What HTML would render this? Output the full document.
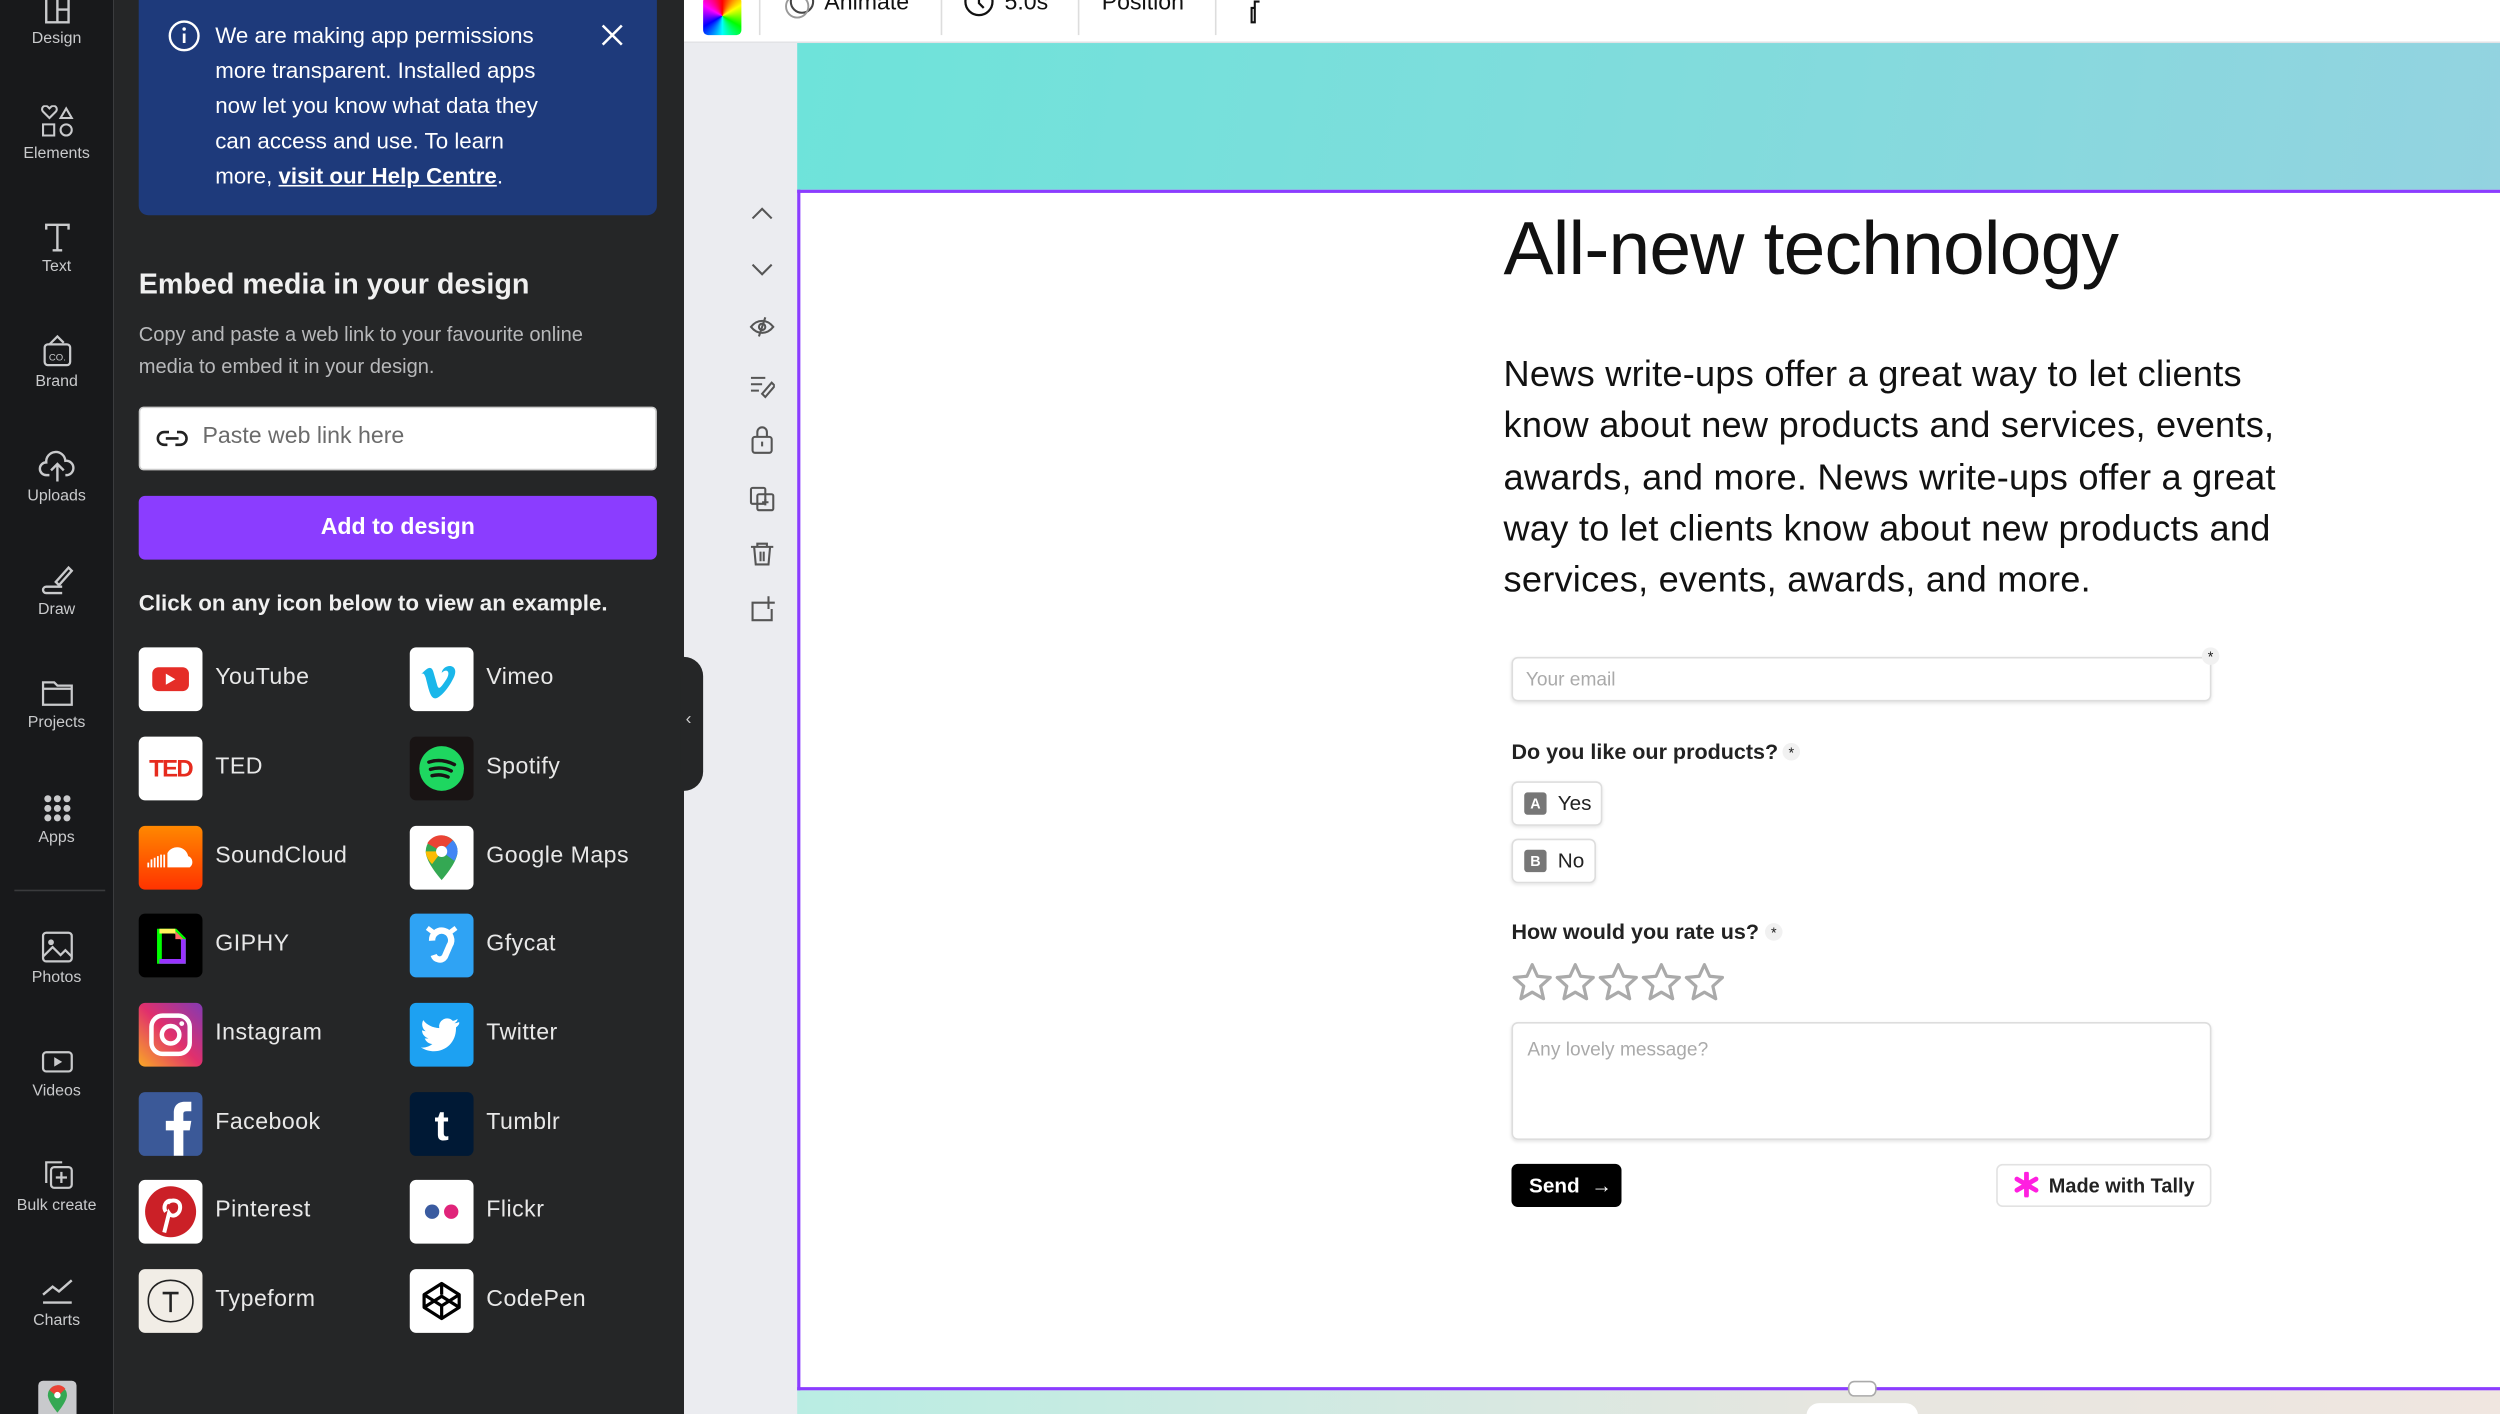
<!DOCTYPE html>
<html><head><meta charset="utf-8"><style>
*{box-sizing:border-box;margin:0;padding:0}
html,body{width:2500px;height:1414px;overflow:hidden;background:#ebecf0}
#w{position:absolute;left:0;top:0;width:1568px;height:887px;overflow:hidden;transform:scale(1.59439);transform-origin:0 0;font-family:"Liberation Sans",sans-serif;background:#ebecf0}
.a{position:absolute}
.rail{left:0;top:0;width:71px;height:887px;background:#18191b}
.ri{position:absolute;left:0;width:71px;text-align:center;color:#c9cacc;font-size:10px}
.ri svg{display:block;margin:0 auto 3px}
.panel{left:71px;top:0;width:358px;height:887px;background:#252627}
.app{position:absolute;width:170px;height:40px;color:#e8e8e8;font-size:14.5px}
.app .ic{position:absolute;left:0;top:0;width:40px;height:40px;border-radius:4px;overflow:hidden}
.app span{position:absolute;left:48px;top:11px;letter-spacing:.3px}
.form{color:#222;font-size:13.5px}
</style></head><body><div id="w">
<div class="a rail"></div>
<div class="ri" style="top:0"><svg width="20" height="16" viewBox="0 0 20 16"><path d="M3 0v14h14V0M10 0v14M10 6h7" fill="none" stroke="#c9cacc" stroke-width="1.5"/></svg>Design</div>
<div class="ri" style="top:66px"><svg width="22" height="22" viewBox="0 0 22 22"><path d="M6 8L2 4a2 2 0 013-3l1 1 1-1a2 2 0 013 3zM13 8l3.5-6L20 8zM2 12h7v7H2z" fill="none" stroke="#c9cacc" stroke-width="1.3"/><circle cx="16.5" cy="15.5" r="3.5" fill="none" stroke="#c9cacc" stroke-width="1.3"/></svg>Elements</div>
<div class="ri" style="top:139px"><svg width="20" height="20" viewBox="0 0 20 20"><path d="M3 5V2h14v3M10 2v16M7 18h6" fill="none" stroke="#c9cacc" stroke-width="1.5"/></svg>Text</div>
<div class="ri" style="top:209px"><svg width="22" height="22" viewBox="0 0 22 22"><rect x="3" y="7" width="16" height="13" rx="2" fill="none" stroke="#c9cacc" stroke-width="1.4"/><path d="M6 7l5-5 4 4" fill="none" stroke="#c9cacc" stroke-width="1.4"/><text x="11" y="17" font-size="6" fill="#c9cacc" text-anchor="middle" font-family="Liberation Sans">CO.</text></svg>Brand</div>
<div class="ri" style="top:281px"><svg width="24" height="22" viewBox="0 0 24 22"><path d="M7 17H5a4 4 0 010-8 6 6 0 0112-1 4.5 4.5 0 011 9h-1M12 21V10M8 14l4-4 4 4" fill="none" stroke="#c9cacc" stroke-width="1.5"/></svg>Uploads</div>
<div class="ri" style="top:352px"><svg width="22" height="22" viewBox="0 0 22 22"><path d="M10 13l8-9 2 2-8 9zM14 16H4a2 2 0 000 4h10" fill="none" stroke="#c9cacc" stroke-width="1.5"/></svg>Draw</div>
<div class="ri" style="top:425px"><svg width="22" height="20" viewBox="0 0 22 20"><path d="M2 3h7l2 2h9v12H2z M2 7h18" fill="none" stroke="#c9cacc" stroke-width="1.4"/></svg>Projects</div>
<div class="ri" style="top:497px"><svg width="20" height="20" viewBox="0 0 20 20" fill="#c9cacc"><circle cx="4" cy="4" r="2.2"/><circle cx="10" cy="4" r="2.2"/><circle cx="16" cy="4" r="2.2"/><circle cx="4" cy="10" r="2.2"/><circle cx="10" cy="10" r="2.2"/><circle cx="16" cy="10" r="2.2"/><circle cx="4" cy="16" r="2.2"/><circle cx="10" cy="16" r="2.2"/><circle cx="16" cy="16" r="2.2"/></svg>Apps</div>
<div class="a" style="left:9px;top:558px;width:57px;height:1px;background:#3a3b3d"></div>
<div class="ri" style="top:583px"><svg width="22" height="22" viewBox="0 0 22 22"><rect x="2" y="2" width="18" height="18" rx="2" fill="none" stroke="#c9cacc" stroke-width="1.4"/><circle cx="7" cy="8" r="1.8" fill="#c9cacc"/><path d="M2 17l6-6 5 5 3-3 4 4" fill="none" stroke="#c9cacc" stroke-width="1.4"/></svg>Photos</div>
<div class="ri" style="top:656px"><svg width="22" height="20" viewBox="0 0 22 20"><rect x="2" y="4" width="18" height="12" rx="2" fill="none" stroke="#c9cacc" stroke-width="1.4"/><path d="M9 7v6l5-3z" fill="#c9cacc"/></svg>Videos</div>
<div class="ri" style="top:726px"><svg width="22" height="22" viewBox="0 0 22 22"><path d="M4 16V3h10" fill="none" stroke="#c9cacc" stroke-width="1.4"/><rect x="7" y="6" width="13" height="13" rx="2" fill="none" stroke="#c9cacc" stroke-width="1.4"/><path d="M13.5 9v7M10 12.5h7" stroke="#c9cacc" stroke-width="1.4"/></svg>Bulk create</div>
<div class="ri" style="top:798px"><svg width="22" height="22" viewBox="0 0 22 22"><path d="M2 14l6-5 4 3 8-7M2 19h18" fill="none" stroke="#c9cacc" stroke-width="1.5"/></svg>Charts</div>
<div class="a" style="left:24px;top:866px;width:24px;height:24px;background:#c8c9cc;border-radius:3px"><svg width="24" height="24" viewBox="0 0 24 24"><path d="M12 3a6 6 0 00-6 6c0 4 6 11 6 11s6-7 6-11a6 6 0 00-6-6z" fill="#34a853"/><path d="M7 6a6 6 0 0110-1l-5 5z" fill="#ea4335"/><circle cx="12" cy="9" r="2" fill="#fff"/></svg></div>

<div class="a panel"></div>
<div class="a" style="left:87px;top:-10px;width:325px;height:145px;background:#1e3a7b;border-radius:6px"></div>
<svg class="a" style="left:105px;top:12px" width="21" height="21" viewBox="0 0 21 21"><circle cx="10.5" cy="10.5" r="9" fill="none" stroke="#fff" stroke-width="1.5"/><path d="M10.5 9v6" stroke="#fff" stroke-width="1.7"/><circle cx="10.5" cy="6.2" r="1.1" fill="#fff"/></svg>
<div class="a" style="left:135px;top:11px;width:260px;color:#fff;font-size:14px;line-height:22px;white-space:nowrap">We are making app permissions<br>more transparent. Installed apps<br>now let you know what data they<br>can access and use. To learn<br>more, <b style="text-decoration:underline">visit our Help Centre</b>.</div>
<svg class="a" style="left:376px;top:14px" width="16" height="16" viewBox="0 0 16 16"><path d="M2 2l12 12M14 2L2 14" stroke="#fff" stroke-width="1.6"/></svg>
<div class="a" style="left:87px;top:168px;color:#f0f0f0;font-size:18px;font-weight:bold">Embed media in your design</div>
<div class="a" style="left:87px;top:200px;width:310px;color:#b8b9bb;font-size:12.6px;line-height:20px">Copy and paste a web link to your favourite online media to embed it in your design.</div>
<div class="a" style="left:87px;top:255px;width:325px;height:40px;background:#fff;border-radius:3px;border:1px solid #ccc"></div>
<svg class="a" style="left:97px;top:266px" width="22" height="18" viewBox="0 0 22 18"><path d="M9 5H6a4 4 0 000 8h2M13 13h3a4 4 0 000-8h-2M7 9h8" fill="none" stroke="#222" stroke-width="1.6"/></svg>
<div class="a" style="left:127px;top:266px;color:#6b6b6b;font-size:14.5px">Paste web link here</div>
<div class="a" style="left:87px;top:311px;width:325px;height:40px;background:#8b3dff;border-radius:4px;color:#fff;font-size:14.5px;font-weight:bold;text-align:center;line-height:40px">Add to design</div>
<div class="a" style="left:87px;top:370px;color:#f0f0f0;font-size:14px;font-weight:bold">Click on any icon below to view an example.</div>

<div class="app" style="left:87px;top:406px"><div class="ic" style="background:#fff"><svg width="40" height="40"><rect x="8.5" y="12.5" width="23" height="15" rx="4" fill="#e52d27"/><path d="M17 16.5v7l6-3.5z" fill="#fff"/></svg></div><span>YouTube</span></div>
<div class="app" style="left:257px;top:406px"><div class="ic" style="background:#fff"><svg width="40" height="40"><path d="M9 15c3-3 5-3 6 1l2 7c1 4 2 3 6-3 3-5 0-7-3-4 1-6 11-6 8 2-3 7-9 14-12 14-3 0-4-5-6-13-1-3-2-3-3-2z" fill="#1ab7ea"/></svg></div><span>Vimeo</span></div>
<div class="app" style="left:87px;top:462px"><div class="ic" style="background:#fff"><svg width="40" height="40"><text x="20" y="25" font-family="Liberation Sans" font-weight="bold" font-size="15" fill="#e62b1e" text-anchor="middle" letter-spacing="-1">TED</text></svg></div><span>TED</span></div>
<div class="app" style="left:257px;top:462px"><div class="ic" style="background:#191414"><svg width="40" height="40"><circle cx="20" cy="20" r="14" fill="#1ed760"/><path d="M12 16c6-2 11-1 16 1.5M13 20.5c5-1.5 9-1 13 1M14 24.5c4-1 7-.6 10 .8" fill="none" stroke="#191414" stroke-width="2.2" stroke-linecap="round"/></svg></div><span>Spotify</span></div>
<div class="app" style="left:87px;top:518px"><div class="ic" style="background:linear-gradient(#ff8800,#ff3300)"><svg width="40" height="40"><path d="M18 26V17a7 7 0 0113 2 4 4 0 011 7z" fill="#fff"/><path d="M6 26v-3M8 26v-5M10 26v-6M12 26v-7M14 26v-8M16 26v-8" stroke="#fff" stroke-width="1.1"/></svg></div><span>SoundCloud</span></div>
<div class="app" style="left:257px;top:518px"><div class="ic" style="background:#fff"><svg width="40" height="40"><path d="M20 6a10 10 0 00-10 10c0 7 10 18 10 18s10-11 10-18A10 10 0 0020 6z" fill="#34a853"/><path d="M11 11a10 10 0 0116-2L20 16z" fill="#ea4335"/><path d="M10 16c0 3 2 6 4 8l6-8z" fill="#fbbc04"/><path d="M27 9a10 10 0 013 7c0 2-1 4-2 6l-8-6z" fill="#4285f4"/><circle cx="20" cy="16" r="3.5" fill="#fff"/></svg></div><span>Google Maps</span></div>
<div class="app" style="left:87px;top:573px"><div class="ic" style="background:#000"><svg width="40" height="40"><path d="M13 11h10l5 5v14H13z" fill="none" stroke="#0f0" stroke-width="3"/><path d="M13 11h10" stroke="#fff35c" stroke-width="3"/><path d="M28 16v14H13" stroke="#9933ff" stroke-width="3" fill="none"/><path d="M23 11l5 5h-5z" fill="#ff6666"/></svg></div><span>GIPHY</span></div>
<div class="app" style="left:257px;top:573px"><div class="ic" style="background:#2fa3f4"><svg width="40" height="40"><path d="M11 9l4 3M29 9l-4 3" stroke="#fff" stroke-width="3"/><path d="M14 17a6 6 0 1111 3l-3 7c-2 3-6 2-7-1" fill="none" stroke="#fff" stroke-width="4"/></svg></div><span>Gfycat</span></div>
<div class="app" style="left:87px;top:629px"><div class="ic" style="background:linear-gradient(45deg,#f9a826,#e1306c 50%,#833ab4)"><svg width="40" height="40"><rect x="8" y="8" width="24" height="24" rx="7" fill="none" stroke="#fff" stroke-width="2.8"/><circle cx="20" cy="20" r="5.5" fill="none" stroke="#fff" stroke-width="2.8"/><circle cx="27" cy="13" r="1.5" fill="#fff"/></svg></div><span>Instagram</span></div>
<div class="app" style="left:257px;top:629px"><div class="ic" style="background:#1da1f2"><svg width="40" height="40"><path d="M31 12c-1 .5-2 .7-3 .8 1-.6 2-1.6 2-2.7-1 .6-2 1-3 1.2a5 5 0 00-8.5 4.5c-4-.2-8-2-10-5-1.5 2.5-.5 5.5 1.5 7-.8 0-1.6-.3-2.3-.6 0 2.5 1.8 4.5 4 5-.7.2-1.5.2-2.3.1.7 2 2.6 3.5 4.8 3.5A10 10 0 017 28c10 6 22 0 22-12v-.6c1-.8 1.7-1.6 2-2.4z" fill="#fff"/></svg></div><span>Twitter</span></div>
<div class="app" style="left:87px;top:685px"><div class="ic" style="background:#3b5998"><svg width="40" height="40"><path d="M22 40V24h-5v-6h5v-5c0-5 3-7 7-7h4v6h-3c-2 0-2 1-2 2v4h5l-1 6h-4v16z" fill="#fff"/></svg></div><span>Facebook</span></div>
<div class="app" style="left:257px;top:685px"><div class="ic" style="background:#001935"><svg width="40" height="40"><text x="20" y="30" font-family="Liberation Sans" font-weight="bold" font-size="27" fill="#fff" text-anchor="middle">t</text></svg></div><span>Tumblr</span></div>
<div class="app" style="left:87px;top:740px"><div class="ic" style="background:#fff"><svg width="40" height="40"><circle cx="20" cy="20" r="16" fill="#cb2027"/><path d="M18 15c1-3 8-3 8 2 0 5-5 7-7 4l-3 12M17 20c-2-3 0-7 3-7" fill="none" stroke="#fff" stroke-width="2.5"/></svg></div><span>Pinterest</span></div>
<div class="app" style="left:257px;top:740px"><div class="ic" style="background:#fff"><svg width="40" height="40"><circle cx="14" cy="20" r="4.5" fill="#3a5ba0"/><circle cx="26" cy="20" r="4.5" fill="#e0247a"/></svg></div><span>Flickr</span></div>
<div class="app" style="left:87px;top:796px"><div class="ic" style="background:#f1ede6"><svg width="40" height="40"><path d="M20 7c8 0 14 5 14 13s-6 13-14 13S6 28 6 20 12 7 20 7z" fill="none" stroke="#222" stroke-width="1"/><path d="M15 15h10M20 15v12" stroke="#222" stroke-width="1.6"/></svg></div><span>Typeform</span></div>
<div class="app" style="left:257px;top:796px"><div class="ic" style="background:#fff"><svg width="40" height="40"><path d="M20 9l11 7v8l-11 7-11-7v-8zM9 16l11 7 11-7M20 9v7M9 24l11-7 11 7M20 31v-8" fill="none" stroke="#000" stroke-width="2" stroke-linejoin="round"/></svg></div><span>CodePen</span></div>

<div class="a" style="left:427px;top:412px;width:14px;height:84px;background:#252627;border-radius:0 12px 12px 0"></div>
<div class="a" style="left:430px;top:445px;color:#ccc;font-size:11px">‹</div>

<div class="a" style="left:429px;top:0;width:1139px;height:27px;background:#fff;border-bottom:1px solid #e2e3e6"></div>
<div class="a" style="left:441px;top:-2px;width:24px;height:24px;border-radius:3px;background:conic-gradient(red,yellow,lime,cyan,blue,magenta,red)"></div>
<div class="a" style="left:476px;top:0;width:1px;height:22px;background:#ddd"></div>
<svg class="a" style="left:490px;top:-8px" width="22" height="22"><circle cx="13" cy="9" r="7" fill="none" stroke="#444" stroke-width="1.3"/><circle cx="10" cy="12" r="7" fill="none" stroke="#999" stroke-width="1.2"/></svg>
<div class="a" style="left:517px;top:-6px;font-size:14.5px;color:#111">Animate</div>
<div class="a" style="left:590px;top:0;width:1px;height:22px;background:#ddd"></div>
<svg class="a" style="left:603px;top:-8px" width="22" height="22"><circle cx="11" cy="9" r="8.5" fill="none" stroke="#111" stroke-width="1.4"/><path d="M11 4v6l3 3" fill="none" stroke="#111" stroke-width="1.4"/></svg>
<div class="a" style="left:630px;top:-6px;font-size:14.5px;color:#111">5.0s</div>
<div class="a" style="left:676px;top:0;width:1px;height:22px;background:#ddd"></div>
<div class="a" style="left:691px;top:-6px;font-size:14.5px;color:#111">Position</div>
<div class="a" style="left:762px;top:0;width:1px;height:22px;background:#ddd"></div>
<svg class="a" style="left:780px;top:0" width="14" height="16"><path d="M10 1H7v4H5v9h2V5" fill="none" stroke="#111" stroke-width="1.3"/></svg>

<svg class="a" style="left:470px;top:126px" width="16" height="280" viewBox="0 0 16 280" fill="none" stroke="#555" stroke-width="1.3">
<path d="M2 11l6-6 6 6"/><path d="M2 40l6 6 6-6"/>
<path d="M1 79c4-5 10-5 14 0-4 5-10 5-14 0zM10 73l-4 12"/><circle cx="8" cy="79" r="2"/>
<path d="M1 111h9M1 115h7M1 119h5M8 121l6-7 2 2-6 7z"/>
<rect x="2" y="148" width="12" height="10" rx="1.5"/><path d="M5 148v-3a3 3 0 016 0v3M8 151v3"/>
<rect x="1" y="180" width="9" height="10" rx="1"/><rect x="5" y="184" width="10" height="10" rx="1"/><path d="M10 187v4M8 189h4"/>
<path d="M1 217h14M5 217v-2h6v2M3 217l1 11h8l1-11M7 220v6M9 220v6"/>
<path d="M10 252H2v11h12v-7M12 248v8M8 252h8"/>
</svg>

<div class="a" style="left:500px;top:27px;width:1068px;height:93px;background:linear-gradient(100deg,#6ee3da,#80dcdc 50%,#93d3e0)"></div>
<div class="a" style="left:500px;top:870px;width:1068px;height:17px;background:linear-gradient(90deg,#b9ede3,#e6e6e0 60%,#f0e6e0)"></div>
<div class="a" style="left:500px;top:119px;width:1070px;height:753px;background:#fff;border:2px solid #8b3dff;border-right:none"></div>
<div class="a" style="left:1159px;top:866px;width:18px;height:10px;background:#fff;border:1px solid #aaa;border-radius:4px"></div>
<div class="a" style="left:1133px;top:880px;width:70px;height:14px;background:#fff;border-radius:8px 8px 0 0"></div>

<div class="a" style="left:943px;top:128px;font-size:47px;color:#111;font-weight:300;letter-spacing:-0.5px">All-new technology</div>
<div class="a" style="left:943px;top:218px;width:510px;font-size:22.7px;line-height:32.3px;color:#111;letter-spacing:.15px">News write-ups offer a great way to let clients know about new products and services, events, awards, and more. News write-ups offer a great way to let clients know about new products and services, events, awards, and more.</div>

<div class="form">
<div class="a" style="left:948px;top:412px;width:439px;height:28px;border:1px solid #ddd;border-radius:4px;box-shadow:0 1px 2px rgba(0,0,0,.1)"></div>
<div class="a" style="left:957px;top:419px;font-size:12px;color:#aaa">Your email</div>
<div class="a" style="left:1381px;top:406px;width:11px;height:11px;border-radius:50%;background:#f1f1f1;font-size:9px;text-align:center;line-height:13px">*</div>
<div class="a" style="left:948px;top:464px;font-size:13.5px;font-weight:bold;color:#222">Do you like our products?</div>
<div class="a" style="left:1118px;top:466px;width:11px;height:11px;border-radius:50%;background:#f1f1f1;font-size:9px;text-align:center;line-height:13px">*</div>
<div class="a" style="left:948px;top:490px;width:57px;height:28px;border:1px solid #ddd;border-radius:4px;box-shadow:0 1px 2px rgba(0,0,0,.1)"></div>
<div class="a" style="left:956px;top:497px;width:14px;height:14px;background:#777;border-radius:2px;color:#fff;font-size:9px;font-weight:bold;text-align:center;line-height:14px">A</div>
<div class="a" style="left:977px;top:496px;font-size:13px">Yes</div>
<div class="a" style="left:948px;top:526px;width:53px;height:28px;border:1px solid #ddd;border-radius:4px;box-shadow:0 1px 2px rgba(0,0,0,.1)"></div>
<div class="a" style="left:956px;top:533px;width:14px;height:14px;background:#777;border-radius:2px;color:#fff;font-size:9px;font-weight:bold;text-align:center;line-height:14px">B</div>
<div class="a" style="left:977px;top:532px;font-size:13px">No</div>
<div class="a" style="left:948px;top:577px;font-size:13.5px;font-weight:bold;color:#222">How would you rate us?</div>
<div class="a" style="left:1107px;top:579px;width:11px;height:11px;border-radius:50%;background:#f1f1f1;font-size:9px;text-align:center;line-height:13px">*</div>
<svg class="a" style="left:948px;top:603px" width="140" height="28" viewBox="0 0 140 28" fill="none" stroke="#aaa" stroke-width="2" stroke-linejoin="round">
<g id="s"><path d="M13 2l3.3 7.3 8 .8-6 5.4 1.8 7.9L13 19.3l-7.1 4.1 1.8-7.9-6-5.4 8-.8z"/></g>
<use href="#s" x="27"/><use href="#s" x="54"/><use href="#s" x="81"/><use href="#s" x="108"/>
</svg>
<div class="a" style="left:948px;top:641px;width:439px;height:74px;border:1px solid #ddd;border-radius:4px;box-shadow:0 1px 2px rgba(0,0,0,.1)"></div>
<div class="a" style="left:958px;top:651px;font-size:12px;color:#aaa">Any lovely message?</div>
<div class="a" style="left:948px;top:730px;width:69px;height:27px;background:#000;border-radius:4px;color:#fff;font-size:13px;font-weight:bold;line-height:27px;padding-left:11px">Send &nbsp;→</div>
<div class="a" style="left:1252px;top:730px;width:135px;height:27px;border:1px solid #e2e2e2;border-radius:4px;font-size:12.5px;font-weight:bold;color:#222;line-height:26px;padding-left:32px">Made with Tally</div>
<svg class="a" style="left:1263px;top:735px" width="16" height="16" viewBox="0 0 16 16"><path d="M8 1v14M2 4.5l12 7M14 4.5l-12 7" stroke="#ff1fe0" stroke-width="3" stroke-linecap="round"/></svg>
</div>
</div></body></html>
